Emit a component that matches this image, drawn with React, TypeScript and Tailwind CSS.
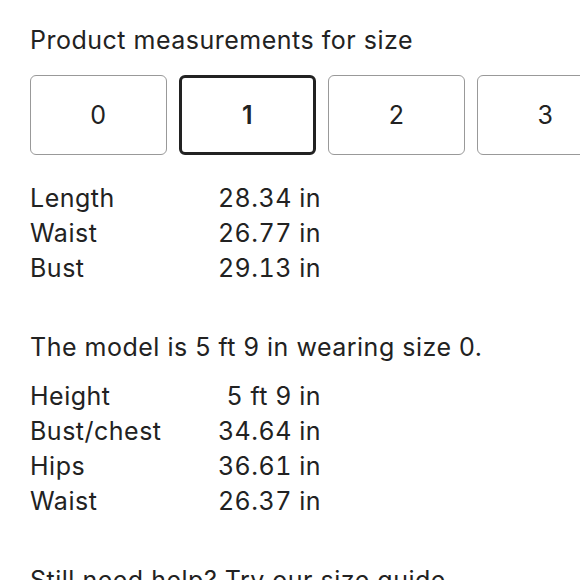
const sizes = ["0", "1", "2", "3"];

const product = [
  { label: "Length", value: "28.34 in" },
  { label: "Waist", value: "26.77 in" },
  { label: "Bust", value: "29.13 in" },
];

const model = [
  { label: "Height", value: "5 ft 9 in" },
  { label: "Bust/chest", value: "34.64 in" },
  { label: "Hips", value: "36.61 in" },
  { label: "Waist", value: "26.37 in" },
];

function Rows({ rows }: { rows: { label: string; value: string }[] }) {
  return (
    <div className="flex flex-col">
      {rows.map((r) => (
        <div key={r.label} className="flex h-[35px] items-center">
          <span className="w-[180px]">{r.label}</span>
          <span className="w-[111px] text-right tabular-nums">{r.value}</span>
        </div>
      ))}
    </div>
  );
}

export default function App() {
  return (
    <div
      className="h-[580px] w-[580px] overflow-hidden bg-white pl-[30px] pt-[23px] text-[25px] leading-[35px] tracking-[0.5px] text-[#222]"
      style={{ fontFamily: "Inter, 'Noto Sans', sans-serif" }}
    >
      <h2 className="font-normal">Product measurements for size</h2>

      {/* size picker */}
      <div className="mt-[17px] flex gap-[12px]">
        {sizes.map((s) => (
          <div
            key={s}
            className={
              s === "1"
                ? "flex h-[80px] w-[137px] shrink-0 items-center justify-center rounded-[6px] border-[3px] border-[#222] font-semibold"
                : "flex h-[80px] w-[137px] shrink-0 items-center justify-center rounded-[6px] border-[1.5px] border-[#999]"
            }
          >
            {s}
          </div>
        ))}
      </div>

      <div className="mt-[26px]">
        <Rows rows={product} />
      </div>

      <p className="mt-[44px]">The model is 5 ft 9 in wearing size 0.</p>

      <div className="mt-[14px]">
        <Rows rows={model} />
      </div>

      <p className="mt-[44px] whitespace-nowrap">Still need help? Try our size guide.</p>
    </div>
  );
}
